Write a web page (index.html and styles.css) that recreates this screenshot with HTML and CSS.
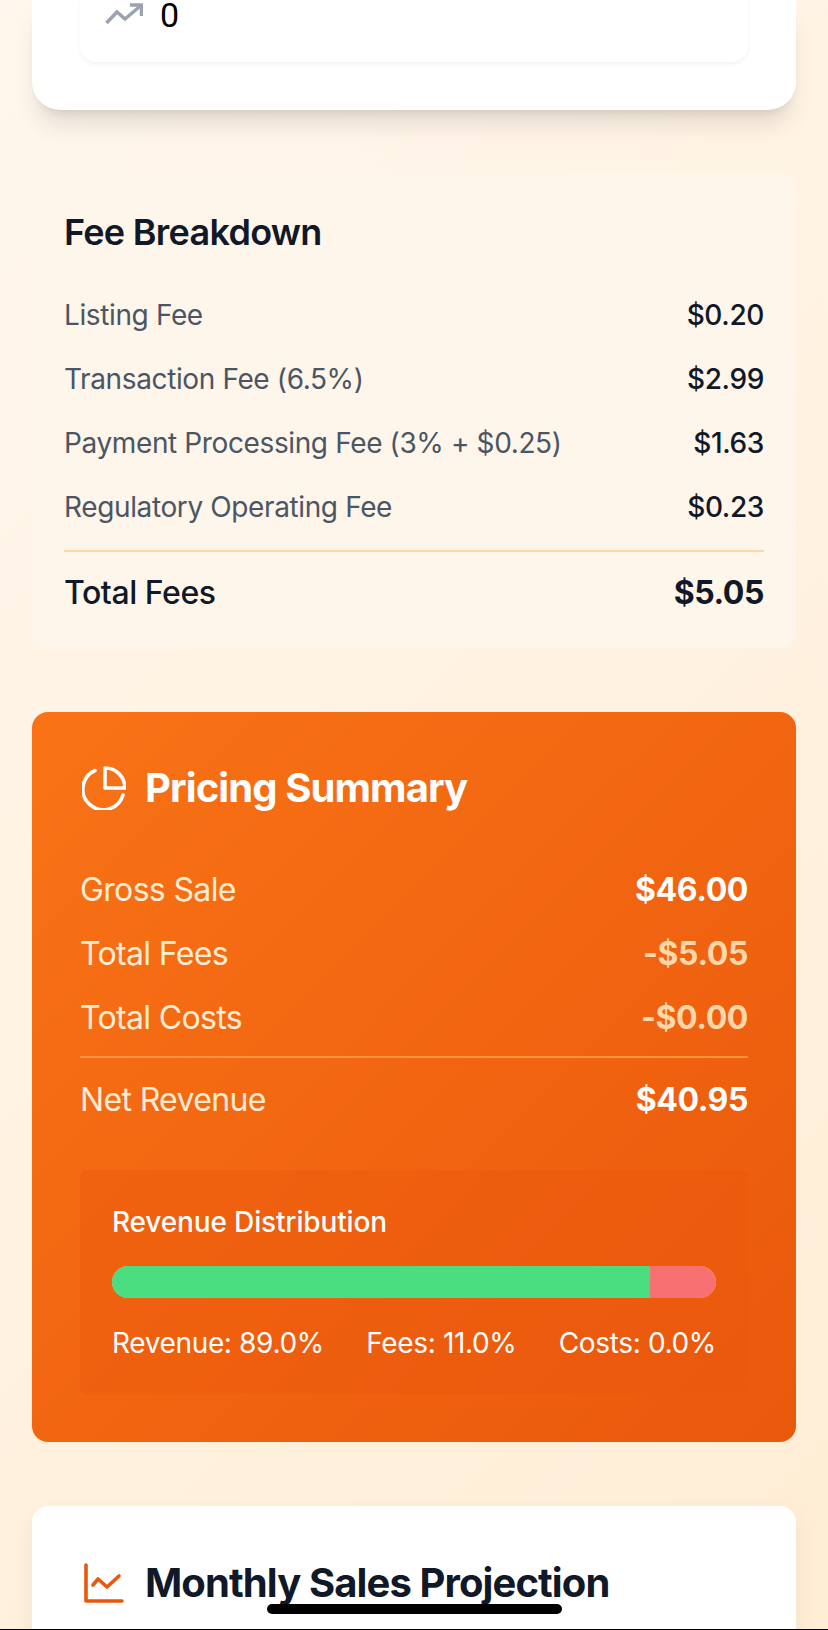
FILE: index.html
```html
<!DOCTYPE html>
<html lang="en">
<head>
<meta charset="utf-8">
<title>Pricing Calculator</title>
<link rel="stylesheet" href="styles.css">
</head>
<body>
<main class="page">
  <section class="card-top">
    <div class="input-card">
      <div class="input-row">
        <svg class="trend-icon" viewBox="0 0 38 24" fill="none" stroke="#9ca3af" stroke-width="3.5"><path d="M1.5 20 12 9l8 7L36.5 2"/><path d="M25 2h11.5v11"/></svg>
        <span class="input-value">0</span>
      </div>
    </div>
  </section>

  <section class="card-fees">
    <h2 class="fees-title">Fee Breakdown</h2>
    <div class="fee-row"><span>Listing Fee</span><span class="fee-value">$0.20</span></div>
    <div class="fee-row"><span>Transaction Fee (6.5%)</span><span class="fee-value">$2.99</span></div>
    <div class="fee-row"><span>Payment Processing Fee (3% + $0.25)</span><span class="fee-value">$1.63</span></div>
    <div class="fee-row"><span>Regulatory Operating Fee</span><span class="fee-value">$0.23</span></div>
    <div class="fee-total"><span>Total Fees</span><span class="fee-total-value">$5.05</span></div>
  </section>

  <section class="card-summary">
    <h2 class="summary-title">
      <svg class="title-icon" viewBox="0 0 44 44" fill="none" stroke="#fff" stroke-width="3.6" stroke-linecap="round" stroke-linejoin="round"><path d="M13 4.5A20.5 20.5 0 1 0 41 29"/><path d="M23 2v20h20A20 20 0 0 0 23 2Z"/></svg>
      Pricing Summary
    </h2>
    <div class="sum-row"><span>Gross Sale</span><span class="sum-value">$46.00</span></div>
    <div class="sum-row"><span>Total Fees</span><span class="sum-value sum-muted">-$5.05</span></div>
    <div class="sum-row"><span>Total Costs</span><span class="sum-value sum-muted">-$0.00</span></div>
    <div class="sum-net"><span>Net Revenue</span><span class="sum-value">$40.95</span></div>
    <div class="dist">
      <div class="dist-label">Revenue Distribution</div>
      <div class="dist-bar"><div class="dist-revenue" style="width:89%"></div><div class="dist-fees" style="width:11%"></div></div>
      <div class="dist-stats"><span>Revenue: 89.0%</span><span>Fees: 11.0%</span><span>Costs: 0.0%</span></div>
    </div>
  </section>

  <section class="card-projection">
    <h2 class="projection-title">
      <svg class="chart-icon" viewBox="0 0 40 40" fill="none" stroke="#ea580c" stroke-width="3.6" stroke-linecap="round" stroke-linejoin="round"><path d="M2 2v36h36"/><path d="M9 22l5-6 9 8 12-11"/></svg>
      Monthly Sales Projection
    </h2>
  </section>
</main>
<div class="home-indicator"></div>
<div class="bottom-line"></div>
</body>
</html>
```
FILE: styles.css
```css
* { box-sizing: border-box; }
html, body { margin: 0; height: 1630px; overflow: hidden; }
body {
  position: relative;
  font-family: Inter, "Liberation Sans", sans-serif;
  background: linear-gradient(135deg, #fff7ed 0%, #ffedd5 100%);
}
h2 { margin: 0; }
.page { padding: 0 32px; }

.card-top {
  background: #fff;
  border-radius: 0 0 28px 28px;
  padding: 0 48px 48px;
  box-shadow: 0 20px 25px -5px rgba(0,0,0,.1), 0 8px 10px -6px rgba(0,0,0,.1);
}
.input-card {
  height: 62px;
  border-radius: 0 0 16px 16px;
  box-shadow: 0 2px 4px rgba(0,0,0,.05);
  padding-left: 25px;
}
.input-row { display: flex; align-items: center; gap: 17px; height: 30px; }
.trend-icon { width: 38px; height: 24px; }
.input-value { font-family: Roboto, sans-serif; font-size: 34px; line-height: 28px; color: #000; }

.card-fees {
  margin-top: 63px;
  background: #fff6eb;
  border-radius: 16px;
  padding: 32px;
}
.fees-title { font-size: 36px; line-height: 54px; font-weight: 600; letter-spacing: -.72px; color: #111827; margin-bottom: 35px; }
.fee-row {
  display: flex; justify-content: space-between;
  font-size: 28px; line-height: 40px; letter-spacing: -.38px; color: #4b5563;
  padding-top: 1px;
  margin-bottom: 23px;
}
.fee-value { color: #111827; font-weight: 500; }
.fee-total {
  display: flex; justify-content: space-between; align-items: center;
  border-top: 2px solid #fed7aa;
  padding-top: 17px;
  padding-bottom: 31px;
  margin-bottom: -32px;
  font-size: 32px; line-height: 48px; letter-spacing: -.45px; font-weight: 500; color: #111827;
}
.fee-total-value { font-weight: 700; }

.card-summary {
  margin-top: 64px;
  border-radius: 16px;
  padding: 48px;
  background: linear-gradient(135deg, #f97316 0%, #ea580c 100%);
  color: #ffedd5;
  font-size: 32px;
  letter-spacing: -.65px;
}
.summary-title {
  display: flex; align-items: center; gap: 19px;
  font-size: 40px; line-height: 56px; font-weight: 700; letter-spacing: -.9px; color: #fff;
  margin-bottom: 48px;
}
.title-icon { width: 44px; height: 44px; margin-left: 2px; }
.sum-row { display: flex; justify-content: space-between; line-height: 48px; padding-top: 2px; margin-bottom: 14px; }
.sum-value { font-weight: 700; letter-spacing: -.4px; color: #fff; }
.sum-muted { color: #fed7aa; }
.sum-net {
  display: flex; justify-content: space-between;
  border-top: 2px solid #fb923c;
  padding-top: 18px;
  line-height: 48px;
  margin-bottom: 46px;
}
.dist {
  border-radius: 8px;
  padding: 32px;
  background: rgba(234,88,12,.4);
  height: 224px;
  letter-spacing: 0;
}
.dist-label { font-size: 28px; line-height: 40px; font-weight: 500; letter-spacing: -.15px; color: #fff; margin-bottom: 24px; }
.dist-bar { display: flex; height: 32px; border-radius: 16px; overflow: hidden; background: #fdba74; }
.dist-revenue { background: #4ade80; }
.dist-fees { background: #f87171; }
.dist-stats {
  display: flex; justify-content: space-between;
  margin-top: 25px;
  font-size: 28px; line-height: 40px; letter-spacing: -.35px; color: #fff;
}

.card-projection {
  margin-top: 64px;
  height: 200px;
  background: #fff;
  border-radius: 16px;
  padding: 49px 48px 48px;
  box-shadow: 0 10px 25px rgba(0,0,0,.06);
}
.projection-title {
  display: flex; align-items: center; gap: 21px;
  font-size: 40px; line-height: 56px; font-weight: 700; letter-spacing: -.9px; color: #111827;
}
.chart-icon { width: 40px; height: 40px; margin-left: 4px; }

.home-indicator {
  position: absolute; left: 267px; top: 1604px;
  width: 295px; height: 10px; border-radius: 5px; background: #000;
}
.bottom-line { position: absolute; left: 0; right: 0; top: 1629px; height: 1px; background: #000; }
```
